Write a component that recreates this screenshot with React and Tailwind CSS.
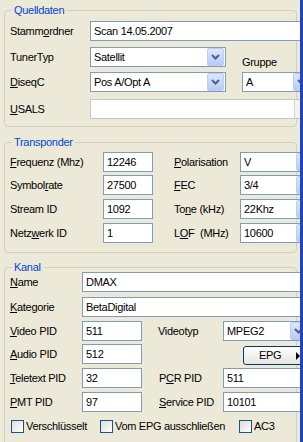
import React from 'react';

const font = { fontFamily: '"Liberation Sans", Arial, sans-serif' };

// Unterstrichener Buchstabe (Tastenkürzel)
function Label({ pre = '', u = '', post = '', className = '' }) {
  return (
    <span className={`leading-[13px] whitespace-nowrap shrink-0 ${className}`}>
      {pre}
      {u && <span className="underline underline-offset-[1px]">{u}</span>}
      {post}
    </span>
  );
}

function Chevron() {
  return (
    <svg width="9" height="6" viewBox="0 0 9 6">
      <polyline points="1,1 4.5,4.5 8,1" fill="none" stroke="#4D6185" strokeWidth="2" />
    </svg>
  );
}

function TextBox({ w, value = '', disabled = false }) {
  return (
    <div
      className={`h-[20px] shrink-0 bg-white border flex items-center pl-[3px] ${disabled ? 'border-[#C9C7BA]' : 'border-[#7F9DB9]'}`}
      style={{ width: w }}
    >
      <span className="leading-[13px] whitespace-nowrap">{value}</span>
    </div>
  );
}

function Combo({ w, value = '', disabled = false }) {
  return (
    <div
      className={`h-[20px] shrink-0 bg-white border flex items-center p-[1px] ${disabled ? 'border-[#C9C7BA]' : 'border-[#7F9DB9]'}`}
      style={{ width: w }}
    >
      <span className="leading-[13px] whitespace-nowrap pl-[2px] flex-1">{value}</span>
      {disabled ? (
        <div className="w-[17px] h-[18px] bg-[#F4F3EE] border-l border-[#D8D6CC]" />
      ) : (
        <div className="w-[17px] h-[18px] rounded-[2px] border border-[#BBCDF4] bg-gradient-to-b from-[#DCE6FD] to-[#B6CBF8] flex items-center justify-center">
          <Chevron />
        </div>
      )}
    </div>
  );
}

function Box({ title, className = '', children }) {
  return (
    <div className={`w-[293px] border border-[#D0D0BF] rounded-[4px] pl-[5px] ${className}`}>
      <div className="-mt-[7px] ml-[2px] px-[2px] w-fit bg-[#ECE9D8] text-[#0046D5] leading-[13px]">{title}</div>
      {children}
    </div>
  );
}

function Check({ label, w }) {
  return (
    <div className="flex items-center shrink-0" style={{ width: w }}>
      <div className="w-[13px] h-[13px] border border-[#1C5180] bg-gradient-to-br from-[#DCDCD7] to-white shrink-0" />
      <span className="ml-[2px] leading-[13px] whitespace-nowrap">{label}</span>
    </div>
  );
}

export default function App() {
  return (
    <div className="w-[303px] h-[442px] bg-[#ECE9D8] flex overflow-hidden text-[11px] tracking-[-0.3px] text-black" style={font}>
      <div className="w-[300px] overflow-hidden pl-[4px] pt-[10px]">

        {/* Quelldaten */}
        <Box title="Quelldaten" className="pb-[7px]">
          <div className="flex items-center h-[20px] mt-[4px]">
            <Label pre="Stamm" u="o" post="rdner" className="w-[80px]" />
            <TextBox w={230} value="Scan 14.05.2007" />
          </div>
          <div className="flex items-center h-[20px] mt-[6px]">
            <Label pre="TunerTyp" className="w-[80px]" />
            <Combo w={136} value="Satellit" />
            <Label pre="Gruppe" className="ml-[16px] self-end -mb-[2px]" />
          </div>
          <div className="flex items-center h-[20px] mt-[5px]">
            <Label u="D" post="iseqC" className="w-[80px]" />
            <Combo w={136} value="Pos A/Opt A" />
            <div className="ml-[16px]">
              <Combo w={70} value="A" />
            </div>
          </div>
          <div className="flex items-center h-[20px] mt-[7px]">
            <Label u="U" post="SALS" className="w-[80px]" />
            <Combo w={223} disabled />
          </div>
        </Box>

        {/* Transponder */}
        <Box title="Transponder" className="mt-[15px] pb-[9px]">
          {[
            [{ u: 'F', post: 'requenz (Mhz)' }, '12246', { u: 'P', post: 'olarisation' }, 'V', 'mt-[3px]'],
            [{ pre: 'Symbol', u: 'r', post: 'ate' }, '27500', { u: 'F', post: 'EC' }, '3/4', 'mt-[3px]'],
            [{ pre: 'Stream ID' }, '1092', { pre: 'To', u: 'n', post: 'e (kHz)' }, '22Khz', 'mt-[4px]'],
            [{ pre: 'Netz', u: 'w', post: 'erk ID' }, '1', { pre: 'L', u: 'O', post: 'F  (MHz)' }, '10600', 'mt-[4px]'],
          ].map(([l, v, r, rv, mt], i) => (
            <div key={i} className={`flex items-center h-[20px] ${mt}`}>
              <Label {...l} className="w-[93px]" />
              <TextBox w={50} value={v} />
              <Label {...r} className="ml-[21px] w-[66px] whitespace-pre" />
              <Combo w={75} value={rv} />
            </div>
          ))}
        </Box>

        {/* Kanal */}
        <Box title="Kanal" className="mt-[14px] pb-[20px]">
          <div className="flex items-center h-[20px] -mt-[2px]">
            <Label u="N" post="ame" className="w-[72px]" />
            <TextBox w={230} value="DMAX" />
          </div>
          <div className="flex items-center h-[20px] mt-[5px]">
            <Label u="K" post="ategorie" className="w-[72px]" />
            <TextBox w={230} value="BetaDigital" />
          </div>
          <div className="flex items-center h-[20px] mt-[4px]">
            <Label u="V" post="ideo PID" className="w-[72px]" />
            <TextBox w={60} value="511" />
            <Label pre="Videotyp" className="ml-[16px] w-[65px]" />
            <Combo w={86} value="MPEG2" />
          </div>
          <div className="flex items-center h-[20px] mt-[3px]">
            <Label u="A" post="udio PID" className="w-[72px]" />
            <TextBox w={60} value="512" />
            <button className="ml-[101px] mt-[3px] w-[75px] h-[19px] shrink-0 rounded-[3px] border border-[#003C74] bg-gradient-to-b from-white to-[#E6E5DE] flex items-center pl-[15px]">
              <span className="leading-[13px]">EPG</span>
              <span className="ml-[15px] w-0 h-0 border-y-[4px] border-y-transparent border-l-[4px] border-l-black" />
            </button>
          </div>
          <div className="flex items-center h-[20px] mt-[4px]">
            <Label u="T" post="eletext PID" className="w-[72px]" />
            <TextBox w={60} value="32" />
            <Label pre="P" u="C" post="R PID" className="ml-[17px] w-[64px]" />
            <TextBox w={90} value="511" />
          </div>
          <div className="flex items-center h-[20px] mt-[4px]">
            <Label u="P" post="MT PID" className="w-[72px]" />
            <TextBox w={60} value="97" />
            <Label u="S" post="ervice PID" className="ml-[17px] w-[64px]" />
            <TextBox w={90} value="10101" />
          </div>
          <div className="flex items-center h-[13px] mt-[8px] ml-[1px]">
            <Check label="Verschlüsselt" w={89} />
            <Check label="Vom EPG ausschließen" w={139} />
            <Check label="AC3" w={50} />
          </div>
        </Box>
      </div>
      <div className="w-[3px] h-full bg-[#1F45B8]" />
    </div>
  );
}
